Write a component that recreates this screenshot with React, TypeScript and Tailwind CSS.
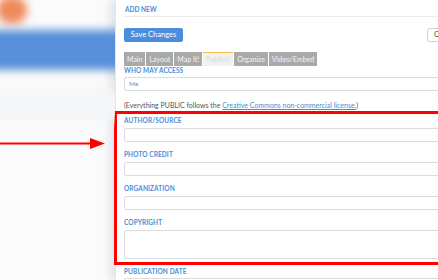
import React from 'react';

const font = { fontFamily: 'Lato, "Open Sans", "Liberation Sans", sans-serif' };

const tabs = ['Main', 'Layout', 'Map It!', 'Publish!', 'Organize', 'Video/Embed'];

function Label({ children, className = '' }: { children: React.ReactNode; className?: string }) {
  return (
    <div className={`h-[8px] text-[6.5px] leading-[8px] font-bold text-[#4a8fd6] tracking-[0.1px] ${className}`}>
      {children}
    </div>
  );
}

function Field({ tall = false, className = '' }: { tall?: boolean; className?: string }) {
  return (
    <div
      className={`w-[330px] rounded-[2px] border border-[#dcdcdc] bg-white ${tall ? 'h-[29px]' : 'h-[14px]'} ${className}`}
    />
  );
}

export default function App() {
  return (
    <div className="relative flex h-[280px] w-[438px] overflow-hidden bg-white" style={font}>
      {/* blurred page behind the drawer */}
      <div className="flex w-[115px] shrink-0 flex-col overflow-hidden bg-[#fbfbfb]">
        <div className="-ml-[3px] -mt-[4px] h-[28px] w-[30px] rounded-full bg-[#ef8a5c] blur-[4px]" />
        <div className="mt-[6px] -ml-[10px] h-[40px] w-[140px] bg-[#5690d8] blur-[4px]" />
        <div className="mt-[20px] -ml-[10px] h-[30px] w-[140px] bg-[#f3f5f7] blur-[6px]" />
      </div>

      {/* drawer */}
      <div className="w-[340px] shrink-0 border-l border-[#e6e6e6] bg-white px-[8px] shadow-[-4px_0_10px_rgba(150,175,185,0.35)]">
        <div className="h-[17px] border-b border-[#ececec] pl-[1px] pt-[6px] text-[6.5px] font-bold leading-[7px] text-[#4a8fd6]">
          ADD NEW
        </div>

        <div className="mt-[11px] flex gap-[244px]">
          <button className="h-[14px] w-[59px] shrink-0 rounded-[2px] bg-[#4a8fdb] text-[7.5px] leading-[14px] text-white">
            Save Changes
          </button>
          <button className="h-[14px] w-[30px] shrink-0 rounded-[3px] border border-[#cfcfcf] bg-white pl-[6px] text-left text-[7.5px] leading-[12px] text-[#555]">
            Cancel
          </button>
        </div>

        <div className="mt-[10px] flex gap-[1px]">
          {tabs.map((t) =>
            t === 'Publish!' ? (
              <div
                key={t}
                className="h-[14px] border-t border-[#f2b950] bg-[#f1f1f1] px-[3px] text-[7px] leading-[13px] text-[#dcdcdc]"
              >
                {t}
              </div>
            ) : (
              <div key={t} className="h-[14px] bg-[#a9a9a9] px-[3px] text-[7px] leading-[14px] text-[#f4f4f4]">
                {t}
              </div>
            )
          )}
        </div>

        <Label className="mt-[1px]">WHO MAY ACCESS</Label>
        <div className="mt-[2px] h-[14px] w-[330px] rounded-[2px] border border-[#dcdcdc] pl-[4px] text-[6.5px] leading-[12px] text-[#8a8a8a]">
          Me
        </div>

        <div className="mt-[10px] h-[8px] whitespace-nowrap text-[7px] leading-[8px] text-[#555]">
          (Everything PUBLIC follows the{' '}
          <span className="text-[#3d8fd1] underline">Creative Commons non-commercial license.</span>)
        </div>

        {/* highlighted group */}
        <div className="-ml-[10px] mt-[2px] w-[360px] border-[3px] border-r-0 border-[#ff0000] pb-[3px] pl-[7px] pt-[3px]">
          <Label>AUTHOR/SOURCE</Label>
          <Field className="mt-[3px]" />
          <Label className="mt-[9px]">PHOTO CREDIT</Label>
          <Field className="mt-[3px]" />
          <Label className="mt-[9px]">ORGANIZATION</Label>
          <Field className="mt-[3px]" />
          <Label className="mt-[9px]">COPYRIGHT</Label>
          <Field tall className="mt-[3px]" />
        </div>

        <Label className="mt-[3px]">PUBLICATION DATE</Label>
        <Field className="mt-[2px]" />
      </div>

      {/* annotation arrow */}
      <svg className="absolute left-0 top-[136px]" width="108" height="16" viewBox="0 0 108 16">
        <line x1="0" y1="7.5" x2="92" y2="7.5" stroke="#ff0000" strokeWidth="2" />
        <polygon points="90,2 105,7.5 90,13" fill="#ff0000" />
      </svg>
    </div>
  );
}
